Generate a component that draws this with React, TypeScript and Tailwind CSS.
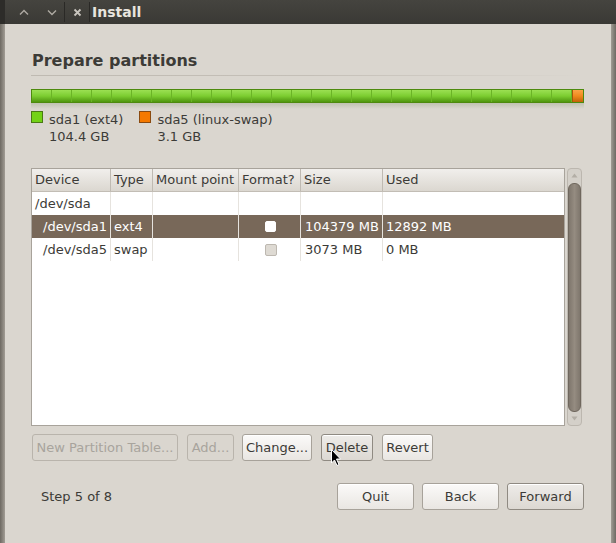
import React from "react";

const font = { fontFamily: '"DejaVu Sans", "Liberation Sans", sans-serif' };

function Btn({ children, disabled, def, w }: { children: React.ReactNode; disabled?: boolean; def?: boolean; w: string }) {
  if (disabled) {
    return (
      <div className={`${w} h-[27px] flex items-center justify-center rounded-[3px] border border-[#b9b4ac] text-[#a8a49d] text-[13px]`}>
        {children}
      </div>
    );
  }
  return (
    <div
      className={`${w} h-[27px] flex items-center justify-center rounded-[3px] border ${def ? "border-[#8f8a82] bg-gradient-to-b from-[#eeece9] to-[#dcd8d2]" : "border-[#a7a29a] bg-gradient-to-b from-[#fbfaf9] to-[#e9e6e2]"} text-[#3c3b37] text-[13px] shadow-[inset_0_1px_0_#ffffff]`}
    >
      {children}
    </div>
  );
}

const cols = "grid grid-cols-[79px_42px_86px_62px_82px_1fr]";

function Cell({ children, last, cls = "" }: { children?: React.ReactNode; last?: boolean; cls?: string }) {
  return <div className={`h-full flex items-center ${last ? "" : "border-r border-[#e6e3de]"} ${cls}`}>{children}</div>;
}

function Check({ on }: { on: boolean }) {
  return on ? (
    <div className="w-[11px] h-[11px] rounded-[2px] bg-white border border-[#ffffff]" />
  ) : (
    <div className="w-[12px] h-[12px] rounded-[2px] bg-[#dedad3] border border-[#bdb8b0]" />
  );
}

export default function App() {
  const segs = Array.from({ length: 27 });
  return (
    <div style={font} className="w-[616px] h-[543px] bg-[#5a4f46] relative overflow-hidden">
      {/* title bar */}
      <div className="h-[24px] bg-gradient-to-b from-[#45443f] to-[#3a3935] flex items-center relative">
        <div className="absolute left-0 top-0 bottom-0 w-[5px] bg-[#2d2c29]" />
        <div className="w-[37px] flex justify-center ml-[5px]">
          <svg width="10" height="7" viewBox="0 0 10 7"><path d="M1 5.5 L5 1.5 L9 5.5" stroke="#aeaaa3" strokeWidth="1.4" fill="none" /></svg>
        </div>
        <div className="w-[20px] flex justify-center">
          <svg width="10" height="7" viewBox="0 0 10 7"><path d="M1 1.5 L5 5.5 L9 1.5" stroke="#aeaaa3" strokeWidth="1.4" fill="none" /></svg>
        </div>
        <div className="w-[1px] h-[20px] bg-[#2a2926] ml-[2px]" />
        <div className="w-[24px] flex justify-center">
          <svg width="9" height="9" viewBox="0 0 9 9"><path d="M1.5 1.5 L7.5 7.5 M7.5 1.5 L1.5 7.5" stroke="#c9c5be" strokeWidth="1.8" fill="none" /></svg>
        </div>
        <div className="w-[1px] h-[20px] bg-[#2a2926]" />
        <div className="ml-[2px] mt-[1px] text-[14px] font-bold text-[#e8e5df]">Install</div>
      </div>
      {/* body with borders */}
      <div className="h-[519px] flex">
        <div className="w-[6px] bg-gradient-to-r from-[#6e6a63] to-[#a29d95]" />
        <div className="flex-1 bg-[#dad6cf] flex flex-col pl-[26px] pr-[27px] pt-[27px] relative">
          <div className="text-[16px] font-bold text-[#3c3b37] leading-[19px] ml-[1px]">Prepare partitions</div>
          <div className="mt-[5px] h-[1px] bg-gradient-to-r from-[#bfbab2] via-[#c4bfb7] to-[#dad6cf]" />
          {/* bar */}
          <div className="mt-[13px] h-[14px] flex border border-[#4d8a0e]">
            <div className="flex-1 flex bg-gradient-to-b from-[#9be052] via-[#7ccd30] to-[#4f960c]">
              {segs.map((_, i) => (
                <div key={i} className="w-[20px] h-full border-r border-[#6bb426]" />
              ))}
            </div>
            <div className="w-[11px] bg-gradient-to-b from-[#fba443] via-[#f08a1c] to-[#c26207] border-l border-[#a85508]" />
          </div>
          <div className="h-[6px] bg-gradient-to-b from-[#b4b9a4] to-[#dad6cf] opacity-70" />
          {/* legend */}
          <div className="mt-[2px] flex text-[13px] text-[#3c3b37] leading-[17px]">
            <div className="flex">
              <div className="w-[12px] h-[12px] bg-[#73d216] border border-[#4a7a14] mt-[0px]" />
              <div className="ml-[6px]">
                <div>sda1 (ext4)</div>
                <div>104.4 GB</div>
              </div>
            </div>
            <div className="flex ml-[16px]">
              <div className="w-[12px] h-[12px] bg-[#f57900] border border-[#8a4a10]" />
              <div className="ml-[6px]">
                <div>sda5 (linux-swap)</div>
                <div>3.1 GB</div>
              </div>
            </div>
          </div>
          {/* table + scrollbar */}
          <div className="mt-[23px] flex h-[258px]">
            <div className="w-[534px] border border-[#a8a39b] bg-white flex flex-col text-[13px] text-[#3c3b37]">
              <div className={`${cols} h-[23px] bg-gradient-to-b from-[#f1efec] to-[#dbd7d0] border-b border-[#c2bdb5]`}>
                {["Device", "Type", "Mount point", "Format?", "Size", "Used"].map((h, i) => (
                  <div key={h} className={`h-full flex items-center pl-[3px] ${i < 5 ? "border-r border-[#bfbab2]" : ""}`}>{h}</div>
                ))}
              </div>
              <div className={`${cols} h-[23px]`}>
                <Cell cls="pl-[3px]">/dev/sda</Cell>
                <Cell /><Cell /><Cell /><Cell /><Cell last />
              </div>
              <div className={`${cols} h-[23px] bg-[#786859] text-white`}>
                <Cell cls="pl-[11px] border-[#7d6e60]">/dev/sda1</Cell>
                <Cell cls="pl-[3px] border-[#7d6e60]">ext4</Cell>
                <Cell cls="border-[#7d6e60]" />
                <Cell cls="justify-center pl-[2px] border-[#7d6e60]"><Check on /></Cell>
                <Cell cls="pl-[4px] border-[#7d6e60]">104379 MB</Cell>
                <Cell last cls="pl-[3px]">12892 MB</Cell>
              </div>
              <div className={`${cols} h-[23px]`}>
                <Cell cls="pl-[11px]">/dev/sda5</Cell>
                <Cell cls="pl-[3px]">swap</Cell>
                <Cell />
                <Cell cls="justify-center pl-[2px]"><Check on={false} /></Cell>
                <Cell cls="pl-[4px]">3073 MB</Cell>
                <Cell last cls="pl-[3px]">0 MB</Cell>
              </div>
              <div className="flex-1" />
            </div>
            <div className="ml-[2px] w-[15px] rounded-[4px] border border-[#bcb7af] bg-[#d4d0c9] flex flex-col items-center">
              <svg className="mt-[4px]" width="7" height="5" viewBox="0 0 7 5"><path d="M0.5 4.5 L3.5 0.5 L6.5 4.5 Z" fill="#b3aea6" /></svg>
              <div className="mt-[5px] w-[13px] flex-1 rounded-[6px] bg-gradient-to-r from-[#7f776d] via-[#958c81] to-[#7f776d] border border-[#6f675d]" />
              <svg className="mt-[4px] mb-[4px]" width="7" height="5" viewBox="0 0 7 5"><path d="M0.5 0.5 L3.5 4.5 L6.5 0.5 Z" fill="#b3aea6" /></svg>
            </div>
          </div>
          {/* buttons row */}
          <div className="mt-[8px] ml-[1px] flex">
            <Btn disabled w="w-[146px]">New Partition Table...</Btn>
            <div className="ml-[9px]"><Btn disabled w="w-[47px]">Add...</Btn></div>
            <div className="ml-[8px]"><Btn w="w-[70px]">Change...</Btn></div>
            <div className="ml-[9px]"><Btn def w="w-[52px]">Delete</Btn></div>
            <div className="ml-[9px]"><Btn w="w-[51px]">Revert</Btn></div>
          </div>
          {/* bottom row */}
          <div className="mt-[22px] flex items-center">
            <div className="ml-[10px] text-[13px] text-[#3c3b37]">Step 5 of 8</div>
            <div className="ml-auto flex gap-[8px]">
              <Btn w="w-[77px]">Quit</Btn>
              <Btn w="w-[77px]">Back</Btn>
              <Btn def w="w-[77px]">Forward</Btn>
            </div>
          </div>
          {/* mouse cursor */}
          <svg className="absolute left-[326px] top-[425px]" width="12" height="18" viewBox="0 0 12 18">
            <path d="M0.5 0.5 L0.5 14 L3.5 11 L6 16.5 L8 15.5 L5.5 10 L9.5 10 Z" fill="#000" stroke="#fff" strokeWidth="1" />
          </svg>
        </div>
        <div className="w-[6px] bg-gradient-to-r from-[#a29d95] to-[#6e6a63]" />
      </div>
    </div>
  );
}
